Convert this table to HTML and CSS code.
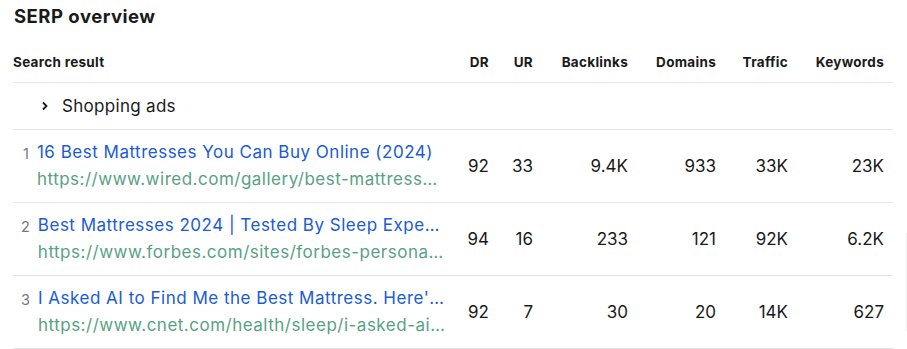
FILE: index.html
```html
<!DOCTYPE html>
<html>
<head>
<meta charset="utf-8">
<link rel="stylesheet" href="styles.css">
</head>
<body>
<div class="panel">
  <h2 class="title">SERP overview</h2>
  <table class="serp">
    <colgroup>
      <col class="c-search"><col class="c-dr"><col class="c-ur"><col class="c-bl"><col class="c-dom"><col class="c-tr"><col class="c-kw">
    </colgroup>
    <thead>
      <tr>
        <th class="left">Search result</th>
        <th>DR</th><th>UR</th><th>Backlinks</th><th>Domains</th><th>Traffic</th><th>Keywords</th>
      </tr>
    </thead>
    <tbody>
      <tr class="ads">
        <td colspan="7">
          <div class="ads-cell">
            <svg class="chev" width="8" height="10" viewBox="0 0 8 10"><path d="M2 1.5 L5.5 5 L2 8.5" fill="none" stroke="#1a1a1a" stroke-width="1.8"/></svg>
            <span>Shopping ads</span>
          </div>
        </td>
      </tr>
      <tr class="res">
        <td class="left">
          <div class="res-cell">
            <span class="pos">1</span>
            <div class="res-text">
              <a class="rtitle">16 Best Mattresses You Can Buy Online (2024)</a>
              <span class="rurl">https://www.wired.com/gallery/best-mattresses-2024/</span>
            </div>
          </div>
        </td>
        <td>92</td><td>33</td><td>9.4K</td><td>933</td><td>33K</td><td>23K</td>
      </tr>
      <tr class="res">
        <td class="left">
          <div class="res-cell">
            <span class="pos">2</span>
            <div class="res-text">
              <a class="rtitle">Best Mattresses 2024 | Tested By Sleep Experts</a>
              <span class="rurl">https://www.forbes.com/sites/forbes-personal-shopper/</span>
            </div>
          </div>
        </td>
        <td>94</td><td>16</td><td>233</td><td>121</td><td>92K</td><td>6.2K</td>
      </tr>
      <tr class="res">
        <td class="left">
          <div class="res-cell">
            <span class="pos">3</span>
            <div class="res-text">
              <a class="rtitle">I Asked AI to Find Me the Best Mattress. Here's What It Said</a>
              <span class="rurl">https://www.cnet.com/health/sleep/i-asked-ai-to-find-me/</span>
            </div>
          </div>
        </td>
        <td>92</td><td>7</td><td>30</td><td>20</td><td>14K</td><td>627</td>
      </tr>
    </tbody>
  </table>
</div>
<div class="scroll-hint"></div>
</body>
</html>
```
FILE: styles.css
```css
* { box-sizing: border-box; }
html, body { margin: 0; padding: 0; background: #fff; }
body {
  font-family: "Inter", "Liberation Sans", sans-serif;
  color: #1a1a1a;
  width: 907px;
  height: 349px;
  overflow: hidden;
  position: relative;
}
.panel {
  padding: 3px 14px 0 13px;
  width: 907px;
}
.title {
  margin: 0 0 0 1px;
  font-size: 18.5px;
  font-weight: 700;
  line-height: 26px;
  letter-spacing: 0.5px;
}
.serp {
  width: 880px;
  border-collapse: collapse;
  table-layout: fixed;
  margin-top: 24px;
}
.c-search { width: 442px; }
.c-dr { width: 43px; }
.c-ur { width: 44px; }
.c-bl { width: 95px; }
.c-dom { width: 88px; }
.c-tr { width: 72px; }
.c-kw { width: 96px; }
.serp th {
  font-size: 13.5px;
  font-weight: 700;
  letter-spacing: 0.3px;
  text-align: right;
  padding: 0 9px 11px 0;
  line-height: 18px;
  border-bottom: 1px solid #e5e5e5;
  white-space: nowrap;
}
.serp th.left { text-align: left; padding-left: 0; }
.serp td {
  font-size: 17px;
  text-align: right;
  padding: 0 9px 0 0;
  border-bottom: 1px solid #e5e5e5;
  vertical-align: middle;
  white-space: nowrap;
}
.serp td.left { text-align: left; }
.ads td { height: 47px; }
.ads-cell {
  display: flex;
  align-items: center;
  padding-left: 28px;
  gap: 13px;
  font-size: 17px;
  letter-spacing: 0.3px;
}
.res td { height: 73px; }
.res-cell {
  display: flex;
  align-items: flex-start;
  gap: 8px;
  padding-left: 8px;
  padding-right: 0;
}
.pos {
  color: #777;
  font-size: 14.5px;
  line-height: 27px;
  width: 9px;
  text-align: right;
  padding-top: 1px;
}
.res-text {
  display: flex;
  flex-direction: column;
  min-width: 0;
}
.rtitle, .rurl {
  font-size: 17px;
  line-height: 27px;
  letter-spacing: 0.5px;
  overflow: hidden;
  text-overflow: ellipsis;
  white-space: nowrap;
}
.rtitle { color: #1a5bd6; text-decoration: none; }
.rurl { color: #57a283; }
.scroll-hint {
  position: absolute;
  right: 0;
  top: 233px;
  width: 1px;
  height: 98px;
  background: #f3f3f3;
}
```
